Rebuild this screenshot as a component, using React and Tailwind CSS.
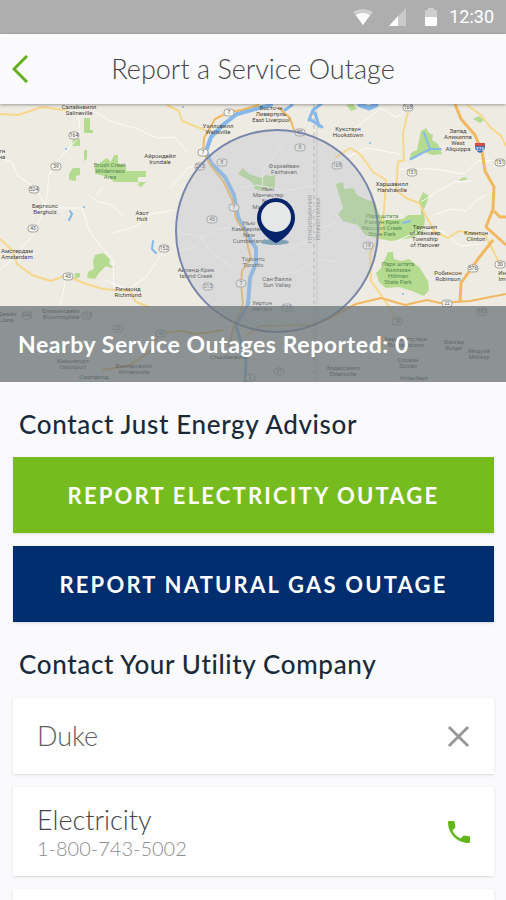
import { useState } from 'react'

const labels = [
  { x: 79, y: 109, lines: ['Салайнвилл', 'Salineville'] },
  { x: 2, y: 153, lines: ['тн', 'на'] },
  { x: 160, y: 158, lines: ['Айрондейл', 'Irondale'] },
  { x: 45, y: 208, lines: ['Бергхолс', 'Bergholz'] },
  { x: 142, y: 215, lines: ['Азот', 'Holt'] },
  { x: 17, y: 253, lines: ['Амстердам', 'Amsterdam'] },
  { x: 128, y: 291, lines: ['Ричмонд', 'Richmond'] },
  { x: 218, y: 128, lines: ['Уэллсвилл', 'Wellsville'] },
  { x: 271, y: 110, lines: ['Восточн', 'Ливерпуль', 'East Liverpool'] },
  { x: 284, y: 168, lines: ['Фэрхейвен', 'Fairhaven'] },
  { x: 268, y: 191, lines: ['Нью', 'Манчестер', 'New', 'Manchester'] },
  { x: 249, y: 225, lines: ['Нью', 'Камберленд', 'New', 'Cumberland'] },
  { x: 253, y: 261, lines: ['Торонто', 'Toronto'] },
  { x: 196, y: 272, lines: ['Айленд-Крик', 'Island Creek'] },
  { x: 277, y: 281, lines: ['Сан Валли', 'Sun Valley'] },
  { x: 262, y: 305, lines: ['Уиртон', 'Weirton'] },
  { x: 348, y: 131, lines: ['Кукстаун', 'Hookstown'] },
  { x: 458, y: 133, lines: ['Запад', 'Аликиппа', 'West', 'Aliquippa'] },
  { x: 392, y: 186, lines: ['Харшавилл', 'Harshaville'] },
  { x: 425, y: 229, lines: ['Тауншип', 'of Хановер', 'Township', 'of Hanover'] },
  { x: 476, y: 235, lines: ['Клинтон', 'Clinton'] },
  { x: 448, y: 275, lines: ['Робинсон', 'Robinson'] },
  { x: 502, y: 275, lines: ['Ин', 'Im'] },
  { x: 7, y: 316, lines: ['Джейн', 'Jane'] },
  { x: 61, y: 313, lines: ['Блумингдейл', 'Bloomingdale'] },
  { x: 73, y: 363, lines: ['Юнионпорт', 'Unionport'] },
  { x: 94, y: 379, lines: ['Смитфилд'] },
  { x: 134, y: 368, lines: ['Винтерсвилл', 'Wintersville'] },
  { x: 229, y: 359, lines: ['Стьюбенвилл'] },
  { x: 343, y: 370, lines: ['Элдерсвилл', 'Eldersville'] },
  { x: 406, y: 341, lines: ['Берджеттстаун', 'Burgettstown'] },
  { x: 408, y: 362, lines: ['Слован', 'Slovan'] },
  { x: 414, y: 380, lines: ['Атласберг'] },
  { x: 454, y: 344, lines: ['Балгер', 'Bulger'] },
  { x: 479, y: 353, lines: ['Мидуэй', 'Midway'] },
]

const parkLabels = [
  { x: 110, y: 167, lines: ['Brush Creek', 'Wilderness', 'Area'] },
  { x: 382, y: 218, lines: ['Парк штата', 'Рэккун Крик', 'Raccoon Creek', 'State Park'] },
  { x: 398, y: 266, lines: ['Парк штата', 'Хиллман', 'Hillman', 'State Park'] },
]

const shields = [
  [74, 135, '164'], [56, 166, '39'], [34, 189, '524'], [33, 228, '43'],
  [68, 276, '43'], [27, 315, '646'], [87, 315, '152'], [118, 328, '22'],
  [161, 333, '43'], [164, 248, '152'], [229, 112, '7'],
  [203, 152, '7'], [200, 166, '213'], [222, 162, '8'], [234, 207, '7'],
  [212, 219, '45'], [300, 147, '8'], [300, 132, '30'], [337, 165, '168'],
  [408, 107, '168'], [412, 172, '151'], [500, 162, '151'], [241, 283, '7'],
  [208, 286, '213'], [287, 307, '105'], [368, 245, '18'], [473, 268, '576'],
  [500, 264, '30'], [447, 303, '22'], [397, 321, '18'], [482, 311, '980'],
  [250, 377, '2'], [279, 371, '27'],
]

const localRoads = [
  'M78 112 L80 136 L58 160 L49 175 L46 205 L33 235 L20 250',
  'M0 158 L12 162 L18 176 L35 188 L46 206',
  'M46 208 H82 L90 232 L104 250 L113 260 L114 290',
  'M95 112 L112 122 L135 128 L157 138 L175 137 L187 152',
  'M166 248 L147 276 L128 290 L105 280',
  'M170 189 L188 168 L200 164',
  'M113 233 L137 226 L151 214 L174 210',
  'M88 195 L98 202 L109 204 L123 215 M96 196 L103 187',
  'M180 233 L205 237 L218 229 L245 227',
  'M200 237 L212 253 L232 267 M178 252 L197 246',
  'M262 196 L263 171 L279 149 L299 130',
  'M240 188 L257 185 L287 191 L315 185',
  'M280 243 L289 250 L308 241 L319 229 L339 221',
  'M278 275 L299 271 L317 259 L338 262',
  'M351 131 L370 117 L381 108 L395 117 L404 113',
  'M331 163 L350 156 L367 148 L400 154',
  'M398 169 L415 169 L434 169 L464 174 L478 161 L506 160',
  'M434 215 L451 209 L466 211 L476 201 L486 195',
  'M421 202 L438 191 L454 182 L473 181',
  'M397 241 L425 228 L443 232 L460 246 L483 244',
  'M60 307 L66 278 M0 270 L17 255',
]

function MapText({ x, y, lines, fill, size }) {
  return (
    <text x={x} y={y} textAnchor="middle" fill={fill} fontSize={size}>
      {lines.map((line, i) => (
        <tspan key={i} x={x} dy={i === 0 ? 0 : size}>{line}</tspan>
      ))}
    </text>
  )
}

function OutageMap() {
  return (
    <svg
      className="block w-full h-full font-['Roboto',sans-serif]"
      viewBox="0 104 506 278"
      preserveAspectRatio="xMidYMid slice"
      role="img"
      aria-label="Map of nearby outages"
    >
      <rect x="0" y="104" width="506" height="278" fill="#eeebe3" />

      {/* parks */}
      <g fill="#b5db91">
        <path d="M84 118h6v12h3v3h-9z M73 139h7v7h-8z M84 150h3v9l-3 2z M73 168h7v7l-4 1v5l-7-1v-6z" />
        <path d="M107 158l4 4 3-7h4v8l8 4v4h20v6h-8v5h-24l-5-5-14-3v-8z M139 182h7l-5 5-3-2z" />
        <path d="M95 255l8-2 7 6-1 5 5 3-3 1-5-2-7 7-4 6-8-1 1-6 6-3-1-8z M75 273h5v4l-5 2z" />
        <path d="M238 174l5-6 6 6 12 4 5-3 5 1 4-1v12l-6 3-8 1-6-2-3-7z" />
        <path d="M421 131l5-3 3 5 4 2-1 5 6 4 4 10-9 1-9-3-15 9 2-8 6-3z" />
        <path d="M336 184l7-2 1 7 9-1 4 7 8 4 10 3 4 12 6 6 18-1 5-4h13v-8l-3-4 5-11 6 4-3 9-3 6 2 9-2 13-13 5-18 3-12-2-15-4-7-10-15-4-5-7 5-6z" />
        <path d="M388 252h5l1 7 7 2 8-2 11 9 8 13 1 9-5 6-12-5-13-4-13 1-7-6-3-9 5-5z" />
        <path d="M473 119l6-3 5 4-4 3z M459 180l5-3 4 2-7 2z M346 105l7-1 4 5-6 2z" />
      </g>

      {/* minor roads */}
      <g fill="none" stroke="#fcfbf8" strokeWidth="1" strokeLinejoin="round">
        {localRoads.map((d) => <path key={d} d={d} />)}
      </g>
      <path d="M314 104V382" stroke="#b9b9b9" strokeWidth="1" strokeDasharray="4 3" />
      <path d="M317 104V382" stroke="#d5d2cd" strokeWidth="1" />

      {/* water */}
      <g fill="none" stroke="#85b7ea" strokeLinecap="round" strokeLinejoin="round">
        <path strokeWidth="4" d="M271 105 L255 109 L237 114 L224 124 L211 137 L206 151 L211 163 L225 177 L234 195 L238 217 L247 235 L256 248 L256 263 L250 278 L248 304" />
        <path strokeWidth="3" d="M248 304 L236 326 L242 345 L246 362 L245 382" />
        <path strokeWidth="3" d="M285 110 L292 105 M309 120 L313 110 L321 104 M311 120 L322 127 M315 113 L319 126" />
        <path strokeWidth="2" d="M411 159 L430 149 L424 133 M431 149 H441 M403 223 L410 221 M70 211 L72 214 L69 220 M153 241 L152 249 L156 253" />
        <path strokeWidth="5" d="M360 105 L369 108 L376 105" />
      </g>
      <g fill="#85b7ea">
        <circle cx="84" cy="207" r="1" /><circle cx="66" cy="149" r="1" /><circle cx="183" cy="107" r="1" />
        <circle cx="370" cy="143" r="1" /><circle cx="403" cy="294" r="1" /><circle cx="354" cy="220" r="1" />
      </g>

      {/* highways */}
      <g fill="none" stroke="#f7d88a" strokeWidth="2" strokeLinejoin="round">
        <path d="M0 114 L18 115 L42 107 L56 109 L66 110" />
        <path d="M167 105 L179 111 L182 121 L205 130" />
        <path d="M0 239 L12 250 L17 264 L32 275 L51 281 L67 275 L83 283 L103 289 L130 291 L136 302 L149 307" />
        <path d="M335 158 L350 148 L360 154 L373 172 L386 180 L384 210 L381 234 L370 253 L371 281 L388 305 L397 322" />
        <path d="M408 112 L403 133 L404 160 L398 162 L396 190 L406 198 L419 203 L434 231 L448 238 L459 231 L485 235 L499 262" />
        <path d="M467 105 L481 115 L490 127 L501 136 L506 146" />
      </g>
      <g fill="none" stroke="#f1b860" strokeWidth="2" strokeLinejoin="round">
        <path d="M259 105 L241 110 L229 112 L215 119 L204 138 L203 152 L211 166 L223 181 L232 199 L236 219 L246 234 L248 247 L251 258 L242 271 L241 284 L243 304 L233 329 L229 347" />
        <path d="M279 108 L290 118 L294 130" />
        <path strokeWidth="3" d="M455 104 L461 119 L475 135 L482 151 L485 171 L494 187 L493 209 L486 227 L506 245" />
        <path strokeWidth="3" d="M494 211 L500 217 H506 M493 240 L478 259 L461 283 L460 302" />
        <path d="M506 294 L470 301 L440 303 L427 300 L405 305 L381 298 L356 304 L330 318 L313 325 L260 326 L247 335" />
        <path d="M161 333 L180 331 L197 334 L223 330 M102 370 L128 366 L149 353 L158 336" />
      </g>

      {/* route shields */}
      {shields.map(([x, y, route]) => (
        <g key={`${x}-${y}`}>
          <rect x={x - 5} y={y - 3} width="10" height="7" rx="3" fill="#f6f4ef" stroke="#a3a3a0" />
          <text x={x} y={y + 2} textAnchor="middle" fontSize="5" fill="#555555">{route}</text>
        </g>
      ))}
      <path d="M475 144 q5 -2 10 0 q1 7 -5 9 q-6 -2 -5 -9z" fill="#486fae" />
      <path d="M475 143h10v3h-10z" fill="#cf4c48" />
      <text x="480" y="151" textAnchor="middle" fontSize="5" fill="#ffffff">376</text>

      {parkLabels.map((l) => <MapText key={l.y} {...l} fill="#568b4b" size={6} />)}
      {labels.map((l) => <MapText key={`${l.x}-${l.y}`} {...l} fill="#45433f" size={6} />)}
      <g fill="#898989" fontSize="6" textAnchor="middle">
        <text transform="translate(312 219) rotate(-90)">ПЕНСИЛЬВАНИЯ</text>
        <text transform="translate(320 219) rotate(-90)">PENNSYLVANIA</text>
      </g>

      {/* search radius */}
      <circle cx="277" cy="231" r="101" fill="#b4bdc8" fillOpacity="0.35" stroke="#7986a9" strokeWidth="2" />

      {/* pin */}
      <ellipse cx="275" cy="242" rx="14" ry="3" fill="#7fa3b5" />
      <path d="M276 243 C271 241 257 231 257 218 A19 20 0 0 1 295 218 C295 231 281 241 276 243z" fill="#07246b" />
      <circle cx="276" cy="217" r="15" fill="#e6e8e8" />
    </svg>
  )
}

function StatusBar() {
  return (
    <div className="flex h-[34px] shrink-0 items-center justify-end bg-[#aeaeae] pr-3 text-white">
      <svg className="mr-4 h-4 w-5" viewBox="0 0 20 16" fill="currentColor" aria-hidden="true">
        <path d="M0 3 Q10 -3 20 3 L10 16z" opacity="0.4" />
        <path d="M3 6 Q10 2 17 6 L10 16z" />
      </svg>
      <svg className="mr-[19px] h-[18px] w-[17px]" viewBox="0 0 17 18" fill="currentColor" aria-hidden="true">
        <path d="M17 0V18H0z" opacity="0.35" />
        <path d="M9 8V18H0z" />
      </svg>
      <svg className="mr-3 h-[18px] w-3" viewBox="0 0 12 18" fill="currentColor" aria-hidden="true">
        <path d="M0 9V3Q0 2 1 2H3V0H9V2H11Q12 2 12 3V9z" opacity="0.4" />
        <path d="M0 9H12V17Q12 18 11 18H1Q0 18 0 17z" />
      </svg>
      <span className="font-['Roboto',sans-serif] text-lg leading-6">12:30</span>
    </div>
  )
}

export default function App() {
  const [company, setCompany] = useState('Duke')

  return (
    <div className="flex h-screen flex-col overflow-hidden bg-[#fafafc] font-['Lato',sans-serif]">
      <StatusBar />

      <header className="relative z-10 flex h-[70px] shrink-0 items-center bg-[#fafafc] px-3 shadow-[0_1px_3px_rgba(0,0,0,0.35)]">
        <button type="button" aria-label="Back" className="w-8 text-[#62b01e]">
          <svg className="h-7 w-4" viewBox="0 0 16 28" fill="none" stroke="currentColor" strokeWidth="3" aria-hidden="true">
            <path d="M15 1 L2 14 L15 27" />
          </svg>
        </button>
        <h1 className="flex-1 pr-8 text-center text-[27px] font-light leading-8 text-[#45454b]">Report a Service Outage</h1>
      </header>

      <section className="relative h-[278px] shrink-0">
        <OutageMap />
        <div className="absolute inset-x-0 bottom-0 flex h-[76px] items-center bg-[#6c7579]/75 px-[18px]">
          <p className="text-[23px] font-bold leading-7 tracking-wide text-white">Nearby Service Outages Reported: 0</p>
        </div>
      </section>

      <main className="flex flex-1 flex-col pl-[13px] pr-3">
        <h2 className="flex h-[75px] shrink-0 items-center px-[6px] pt-2 text-[26px] font-medium leading-8 tracking-wide text-[#1b2a3a]">
          Contact Just Energy Advisor
        </h2>
        <div className="flex shrink-0 flex-col gap-[13px]">
          <button type="button" className="h-[76px] bg-[#77bc1f] text-[22px] font-bold tracking-widest text-white shadow">
            REPORT ELECTRICITY OUTAGE
          </button>
          <button type="button" className="h-[76px] bg-[#002d6d] text-[22px] font-bold tracking-widest text-white shadow">
            REPORT NATURAL GAS OUTAGE
          </button>
        </div>

        <h2 className="flex h-[76px] shrink-0 items-center px-[6px] pt-2 text-[26px] font-medium leading-8 tracking-wide text-[#1b2a3a]">
          Contact Your Utility Company
        </h2>
        <div className="flex shrink-0 flex-col gap-[13px]">
          <div className="flex h-[76px] items-center bg-white px-6 shadow">
            <input
              type="text"
              aria-label="Utility company"
              value={company}
              onChange={(e) => setCompany(e.target.value)}
              className="min-w-0 flex-1 bg-transparent text-[27px] font-light leading-8 text-[#5c5c60] outline-none"
            />
            <button type="button" aria-label="Clear company" onClick={() => setCompany('')} className="text-[#979797]">
              <svg className="h-[23px] w-[23px]" viewBox="0 0 24 24" fill="none" stroke="currentColor" strokeWidth="3" aria-hidden="true">
                <path d="M2 2 L22 22 M22 2 L2 22" />
              </svg>
            </button>
          </div>

          <div className="flex h-[89px] items-center justify-between bg-white px-6 shadow">
            <div>
              <p className="text-[27px] font-light leading-8 text-[#45454b]">Electricity</p>
              <p className="text-xl font-light leading-6 text-[#8c8c90]">1-800-743-5002</p>
            </div>
            <a href="tel:1-800-743-5002" aria-label="Call electricity provider" className="text-[#62b71a]">
              <svg className="h-[22px] w-[22px]" viewBox="3 3 18 18" fill="currentColor" aria-hidden="true">
                <path d="M6.62 10.79c1.44 2.83 3.76 5.14 6.59 6.59l2.2-2.2c.27-.27.67-.36 1.02-.24 1.12.37 2.33.57 3.57.57.55 0 1 .45 1 1V20c0 .55-.45 1-1 1-9.39 0-17-7.61-17-17 0-.55.45-1 1-1h3.5c.55 0 1 .45 1 1 0 1.25.2 2.45.57 3.57.11.35.03.74-.25 1.02l-2.2 2.2z" />
              </svg>
            </a>
          </div>

          <div className="h-[89px] bg-white shadow"></div>
        </div>
      </main>
    </div>
  )
}
